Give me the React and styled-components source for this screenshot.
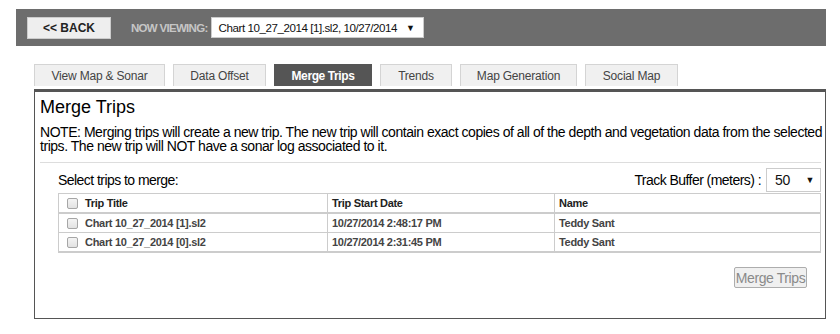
import React from 'react';
import styled, { createGlobalStyle } from 'styled-components';

const GlobalStyle = createGlobalStyle`
  body {
    margin: 0;
    background: #fff;
    font-family: "Liberation Sans", Arial, sans-serif;
    color: #000;
  }
`;

const StyledPage = styled.div`
  padding: 9px 14px 0 16px;
  width: 810px;
`;

const StyledTopBar = styled.div`
  display: flex;
  align-items: center;
  height: 37px;
  padding-left: 11px;
  background: #6d6d6d;
`;

const StyledBackButton = styled.button`
  width: 84px;
  height: 22px;
  padding: 0;
  background: #eeeeee;
  border: 1px solid #cccccc;
  font-family: inherit;
  font-size: 12px;
  font-weight: bold;
  color: #222;
`;

const StyledNowLabel = styled.span`
  margin: 0 3px 0 20px;
  font-size: 11.5px;
  font-weight: bold;
  letter-spacing: -0.7px;
  color: #c6c6c6;
`;

const StyledSelect = styled.div`
  display: flex;
  align-items: center;
  justify-content: space-between;
  box-sizing: border-box;
  width: ${({ width }) => width}px;
  height: ${({ height }) => height}px;
  padding: 0 ${({ padRight }) => padRight}px 0 ${({ pad }) => pad}px;
  background: #fff;
  border: 1px solid #cccccc;
  font-size: ${({ size }) => size}px;
  letter-spacing: ${({ spacing }) => spacing}px;
  white-space: nowrap;
  color: #111;
`;

const StyledArrow = styled.span`
  font-size: 9px;
  color: #111;
`;

const StyledTabs = styled.div`
  display: flex;
  gap: 8px;
  margin: 18px 0 0 18px;
`;

const StyledTab = styled.div`
  display: flex;
  align-items: center;
  justify-content: center;
  box-sizing: border-box;
  width: ${({ width }) => width}px;
  height: 22px;
  border: 1px solid ${({ active }) => (active ? '#555' : '#d4d4d4')};
  border-bottom: none;
  background: ${({ active }) => (active ? '#555555' : '#f0f0f0')};
  color: ${({ active }) => (active ? '#fff' : '#444')};
  font-size: 12px;
  font-weight: ${({ active }) => (active ? 'bold' : 'normal')};
  letter-spacing: ${({ active }) => (active ? '-0.4px' : '-0.2px')};
`;

const StyledPanel = styled.div`
  box-sizing: border-box;
  margin: 3px 0 0 18px;
  width: 792px;
  height: 230px;
  padding: 5px 0 0 5px;
  border: 1px solid #555;
  border-top-width: 3px;
`;

const StyledHeading = styled.h1`
  margin: 0;
  font-size: 18px;
  font-weight: normal;
  line-height: 20px;
`;

const StyledNote = styled.p`
  margin: 8px 0 0 0;
  font-size: 14px;
  line-height: 14px;
  letter-spacing: -0.46px;
`;

const StyledRule = styled.hr`
  margin: 9px 4px 0 0;
  border: none;
  border-top: 1px solid #dddddd;
`;

const StyledSection = styled.div`
  margin: 5px 4px 0 18px;
`;

const StyledToolbar = styled.div`
  display: flex;
  align-items: center;
  justify-content: space-between;
  height: 24px;
  font-size: 14px;
  letter-spacing: -0.55px;
`;

const StyledBuffer = styled.div`
  display: flex;
  align-items: center;
  gap: 5px;
`;

const StyledTable = styled.table`
  width: 100%;
  margin-top: 1px;
  border-collapse: collapse;
  border: 1px solid #cccccc;
  border-bottom-width: 2px;
  font-size: 11px;
  font-weight: bold;
  letter-spacing: -0.3px;
`;

const StyledHeadCell = styled.th`
  height: 18px;
  padding: 0 4px;
  text-align: left;
  color: #222;
  border: 1px solid #cccccc;
  border-bottom-width: 2px;
`;

const StyledCell = styled.td`
  height: 18px;
  padding: 0 4px;
  color: #444;
  border: 1px solid #cccccc;
`;

const StyledCheckCell = styled.span`
  display: flex;
  align-items: center;
  gap: 7px;
  padding-left: 4px;
`;

const StyledCheckbox = styled.span`
  display: inline-block;
  box-sizing: border-box;
  width: 11px;
  height: 11px;
  border: 1px solid #a6a6a6;
  border-radius: 2px;
  background: linear-gradient(#f4f4f4, #e2e2e2);
`;

const StyledFooter = styled.div`
  display: flex;
  justify-content: flex-end;
  margin-top: 14px;
  padding-right: 14px;
`;

const StyledMergeButton = styled.button`
  width: 73px;
  height: 21px;
  padding: 0;
  border: 1px solid #adadad;
  border-radius: 2px;
  background: #f0f0f0;
  color: #8a8a8a;
  font-family: inherit;
  font-size: 14px;
  letter-spacing: -0.4px;
  white-space: nowrap;
`;

const tabs = [
  { label: 'View Map & Sonar', width: 131 },
  { label: 'Data Offset', width: 93 },
  { label: 'Merge Trips', width: 98, active: true },
  { label: 'Trends', width: 72 },
  { label: 'Map Generation', width: 117 },
  { label: 'Social Map', width: 93 },
];

const trips = [
  { title: 'Chart 10_27_2014 [1].sl2', date: '10/27/2014 2:48:17 PM', name: 'Teddy Sant' },
  { title: 'Chart 10_27_2014 [0].sl2', date: '10/27/2014 2:31:45 PM', name: 'Teddy Sant' },
];

const App = () => (
  <StyledPage>
    <GlobalStyle />
    <StyledTopBar>
      <StyledBackButton>&lt;&lt; BACK</StyledBackButton>
      <StyledNowLabel>NOW VIEWING:</StyledNowLabel>
      <StyledSelect width={213} height={21} pad={7} padRight={8} size={11.6} spacing={-0.45}>
        Chart 10_27_2014 [1].sl2, 10/27/2014
        <StyledArrow>▼</StyledArrow>
      </StyledSelect>
    </StyledTopBar>

    <StyledTabs>
      {tabs.map((tab) => (
        <StyledTab key={tab.label} width={tab.width} active={tab.active}>
          {tab.label}
        </StyledTab>
      ))}
    </StyledTabs>

    <StyledPanel>
      <StyledHeading>Merge Trips</StyledHeading>
      <StyledNote>
        NOTE: Merging trips will create a new trip. The new trip will contain exact copies of all of
        the depth and vegetation data from the selected trips. The new trip will NOT have a sonar log
        associated to it.
      </StyledNote>
      <StyledRule />
      <StyledSection>
        <StyledToolbar>
          <span>Select trips to merge:</span>
          <StyledBuffer>
            Track Buffer (meters) :
            <StyledSelect width={55} height={24} pad={8} padRight={6} size={14} spacing={-0.3}>
              50
              <StyledArrow>▼</StyledArrow>
            </StyledSelect>
          </StyledBuffer>
        </StyledToolbar>
        <StyledTable>
          <thead>
            <tr>
              <StyledHeadCell style={{ width: 260 }}>
                <StyledCheckCell>
                  <StyledCheckbox />
                  Trip Title
                </StyledCheckCell>
              </StyledHeadCell>
              <StyledHeadCell style={{ width: 218 }}>Trip Start Date</StyledHeadCell>
              <StyledHeadCell>Name</StyledHeadCell>
            </tr>
          </thead>
          <tbody>
            {trips.map((trip) => (
              <tr key={trip.title}>
                <StyledCell>
                  <StyledCheckCell>
                    <StyledCheckbox />
                    {trip.title}
                  </StyledCheckCell>
                </StyledCell>
                <StyledCell>{trip.date}</StyledCell>
                <StyledCell>{trip.name}</StyledCell>
              </tr>
            ))}
          </tbody>
        </StyledTable>
        <StyledFooter>
          <StyledMergeButton disabled>Merge Trips</StyledMergeButton>
        </StyledFooter>
      </StyledSection>
    </StyledPanel>
  </StyledPage>
);

export default App;
